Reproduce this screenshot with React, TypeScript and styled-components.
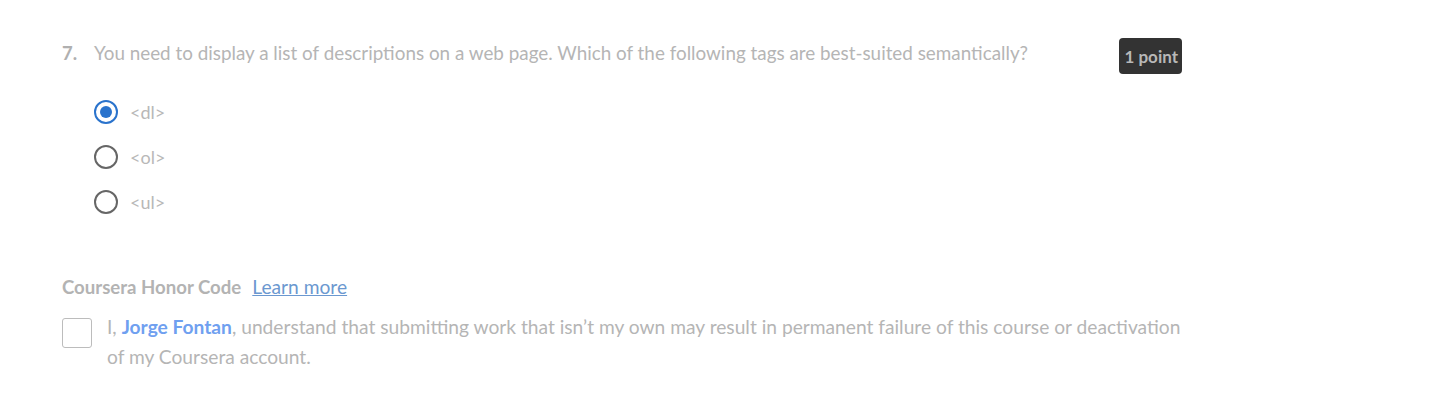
import React from "react";
import styled, { createGlobalStyle } from "styled-components";

const Global = createGlobalStyle`
  html, body { margin: 0; padding: 0; background: #fff; }
  body { font-family: Lato, "Open Sans", sans-serif; }
`;

const Page = styled.div`
  width: 1455px;
  height: 408px;
  box-sizing: border-box;
  padding: 38px 0 0 62px;
`;

const Question = styled.div`
  width: 1120px;
  display: flex;
  align-items: flex-start;
`;

const Num = styled.div`
  width: 32px;
  flex: none;
  font-size: 18.5px;
  font-weight: 700;
  color: #b0b0b0;
  line-height: 30px;
`;

const Body = styled.div`
  flex: 1;
`;

const QText = styled.div`
  font-size: 18.85px;
  color: #b5b5b5;
  line-height: 30px;
`;

const Badge = styled.div`
  flex: none;
  height: 36px;
  padding: 0 4px 0 5px;
  background: #333;
  border-radius: 4px;
  color: #b8b8b8;
  font-weight: 700;
  font-size: 17px;
  display: flex;
  align-items: center;
`;

const Options = styled.div`
  margin-top: 32px;
  display: flex;
  flex-direction: column;
  gap: 21px;
`;

const Option = styled.label`
  display: flex;
  align-items: center;
  gap: 12px;
  height: 24px;
`;

const Radio = styled.span<{ $checked?: boolean }>`
  width: 24px;
  height: 24px;
  box-sizing: border-box;
  border-radius: 50%;
  border: 2px solid ${(p) => (p.$checked ? "#2a73cc" : "#666")};
  display: flex;
  align-items: center;
  justify-content: center;
  &::after {
    content: "";
    display: ${(p) => (p.$checked ? "block" : "none")};
    width: 12px;
    height: 12px;
    border-radius: 50%;
    background: #2a73cc;
  }
`;

const OptText = styled.span`
  font-size: 18px;
  color: #b8b8b8;
`;

const Honor = styled.div`
  margin-top: 61px;
  display: flex;
  align-items: baseline;
  gap: 11px;
`;

const HonorTitle = styled.span`
  font-size: 18.6px;
  font-weight: 700;
  color: #b3b3b3;
`;

const Learn = styled.a`
  font-size: 19.2px;
  color: #6b98d0;
  text-decoration: underline;
`;

const Agree = styled.div`
  margin-top: 14px;
  display: flex;
  gap: 15px;
`;

const Box = styled.span`
  flex: none;
  width: 30px;
  height: 30px;
  box-sizing: border-box;
  border: 1px solid #bcbcbc;
  border-radius: 3px;
  margin-top: 6px;
`;

const AgreeText = styled.div`
  width: 1088px;
  font-size: 19.2px;
  line-height: 30px;
  color: #b5b5b5;
`;

const Name = styled.b`
  color: #6fa0f0;
`;

export default function App() {
  return (
    <Page>
      <Global />
      <Question>
        <Num>7.</Num>
        <Body>
          <QText>
            You need to display a list of descriptions on a web page. Which of the following tags are best-suited semantically?
          </QText>
          <Options>
            <Option>
              <Radio $checked />
              <OptText>&lt;dl&gt;</OptText>
            </Option>
            <Option>
              <Radio />
              <OptText>&lt;ol&gt;</OptText>
            </Option>
            <Option>
              <Radio />
              <OptText>&lt;ul&gt;</OptText>
            </Option>
          </Options>
        </Body>
        <Badge>1 point</Badge>
      </Question>
      <Honor>
        <HonorTitle>Coursera Honor Code</HonorTitle>
        <Learn href="#">Learn more</Learn>
      </Honor>
      <Agree>
        <Box />
        <AgreeText>
          I, <Name>Jorge Fontan</Name>, understand that submitting work that isn’t my own may result in permanent failure of this course or deactivation of my Coursera account.
        </AgreeText>
      </Agree>
    </Page>
  );
}
